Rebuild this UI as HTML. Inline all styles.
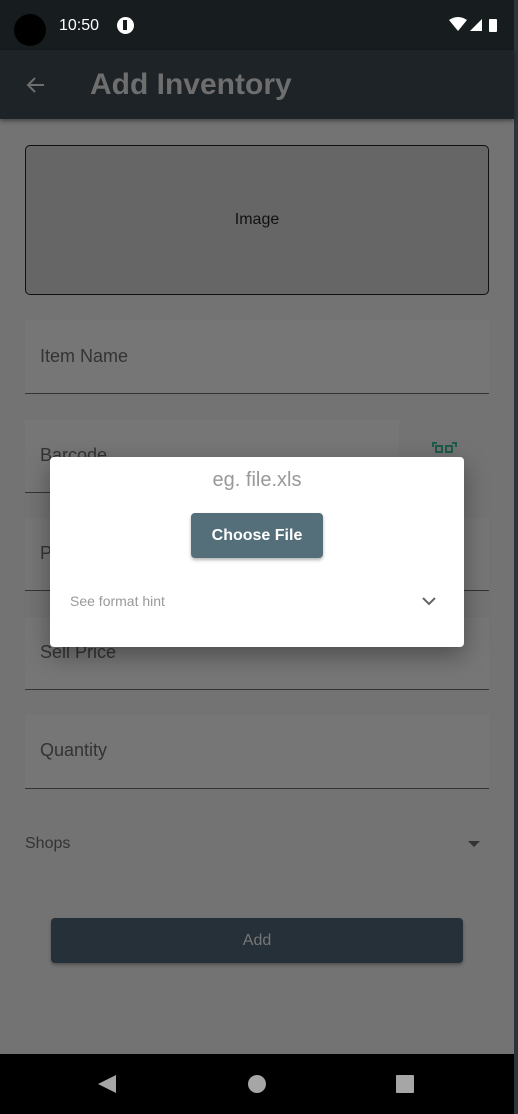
<!DOCTYPE html>
<html><head><style>
*{margin:0;padding:0;box-sizing:border-box}
body{width:518px;height:1114px;position:relative;overflow:hidden;background:#737373;font-family:"Liberation Sans",Roboto,sans-serif}
.abs{position:absolute}
.field{position:absolute;left:25px;width:464px;background:#767676;border-bottom:1.5px solid #333;}
.field span{position:absolute;left:15px;font-size:18px;color:#333}
</style></head><body>
<div class="abs" style="left:0;top:0;width:514px;height:50px;background:#171c1e"></div>
<div class="abs" style="left:514px;top:0;width:4px;height:1114px;background:#2e333a"></div>
<div class="abs" style="left:14px;top:14px;width:32px;height:32px;border-radius:50%;background:#000"></div>
<div class="abs" style="left:59px;top:17px;color:#fff;font-size:16px">10:50</div>
<div class="abs" style="left:117px;top:17px;width:17px;height:17px;border-radius:50%;background:#fff"></div>
<div class="abs" style="left:123px;top:20px;width:4px;height:10px;background:#171c1e"></div>
<svg class="abs" style="left:448px;top:16px" width="60" height="18"><path d="M1 4 Q10 -2 19 4 L10 15Z" fill="#fff"/><path d="M22 15 L34 3 L34 15Z" fill="#fff"/><rect x="41" y="3" width="8" height="13" rx="1" fill="#fff"/></svg>
<div class="abs" style="left:0;top:50px;width:514px;height:69px;background:#1d2326;box-shadow:0 2px 4px rgba(0,0,0,.4)"></div>
<svg class="abs" style="left:23px;top:73px" width="24" height="24"><path d="M21 12H5M12 5l-7 7 7 7" stroke="#6e6e6e" stroke-width="2" fill="none"/></svg>
<div class="abs" style="left:90px;top:68px;color:#6e6e6e;font-size:30px;font-weight:bold">Add Inventory</div>
<div class="abs" style="left:25px;top:145px;width:464px;height:150px;background:#666;border:1.5px solid #111;border-radius:5px;"></div>
<div class="abs" style="left:0;width:514px;top:211px;text-align:center;font-size:16px;color:#111">Image</div>
<div class="field" style="top:320px;height:74px"><span style="top:26px">Item Name</span></div>
<div class="field" style="top:420px;height:73px;width:374px"><span style="top:25px">Barcode</span></div>
<svg class="abs" style="left:432px;top:442px" width="25" height="14"><path d="M1 5V1h4M20 1h4v4" stroke="#1f5a4a" stroke-width="2" fill="none"/><rect x="4" y="4" width="6" height="6" stroke="#1f5a4a" stroke-width="2" fill="none"/><rect x="14" y="4" width="6" height="6" stroke="#1f5a4a" stroke-width="2" fill="none"/></svg>
<div class="field" style="top:518px;height:73px"><span style="top:25px">Price</span></div>
<div class="field" style="top:617px;height:73px"><span style="top:25px">Sell Price</span></div>
<div class="field" style="top:715px;height:74px"><span style="top:25px">Quantity</span></div>
<div class="abs" style="left:25px;top:835px;font-size:16px;color:#333">Shops</div>
<svg class="abs" style="left:467px;top:840px" width="14" height="8"><path d="M1 1h12L7 7Z" fill="#333"/></svg>
<div class="abs" style="left:51px;top:918px;width:412px;height:45px;background:#263038;border-radius:4px;box-shadow:0 2px 3px rgba(0,0,0,.3);text-align:center;line-height:45px;color:#777;font-size:16px;font-weight:500">Add</div>
<div class="abs" style="left:50px;top:457px;width:414px;height:190px;background:#fff;border-radius:4px;box-shadow:0 8px 24px rgba(0,0,0,.35)"></div>
<div class="abs" style="left:50px;width:414px;top:469px;text-align:center;font-size:20px;color:#999">eg. file.xls</div>
<div class="abs" style="left:191px;top:513px;width:132px;height:45px;background:#546e7a;border-radius:4px;box-shadow:0 2px 3px rgba(0,0,0,.3);color:#fff;font-size:16px;text-align:center;line-height:46px;font-weight:bold">Choose File</div>
<div class="abs" style="left:70px;top:593px;font-size:14px;color:#999">See format hint</div>
<svg class="abs" style="left:421px;top:596px" width="16" height="11"><path d="M2 2l6 6 6-6" stroke="#666" stroke-width="2" fill="none"/></svg>
<div class="abs" style="left:0;top:1054px;width:514px;height:60px;background:#000"></div>
<svg class="abs" style="left:0;top:1054px" width="514" height="60"><path d="M116 21v18L98 30Z" fill="#a6a6a6"/><circle cx="257" cy="30" r="9" fill="#a6a6a6"/><rect x="396" y="21" width="18" height="18" rx="1" fill="#a6a6a6"/></svg>
</body></html>
